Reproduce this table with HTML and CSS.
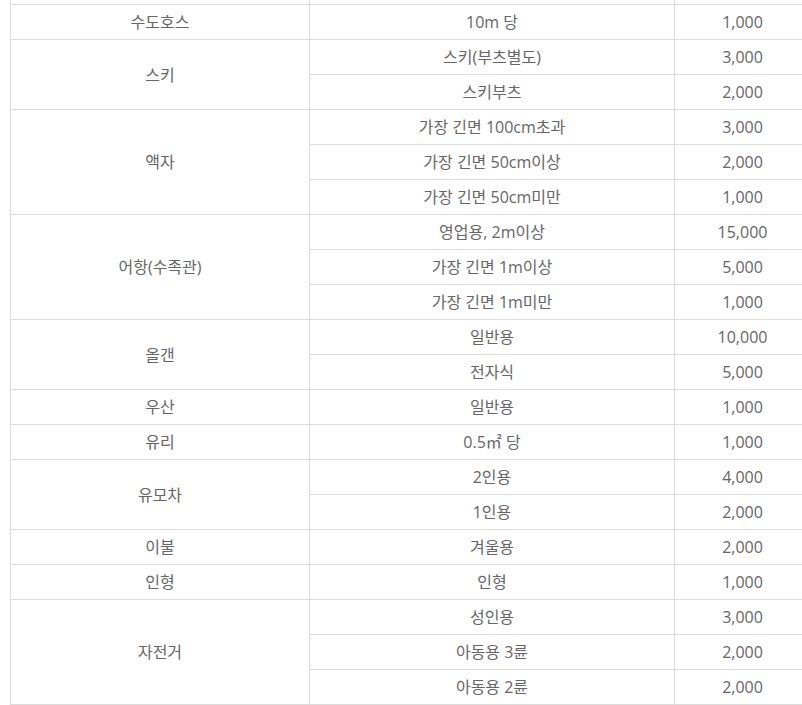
FILE: index.html
```html
<!DOCTYPE html>
<html lang="ko">
<head>
<meta charset="utf-8">
<link rel="stylesheet" href="styles.css">
</head>
<body>
<div class="viewport">
<table class="price">
<colgroup><col class="c1"><col class="c2"><col class="c3"></colgroup>
<tbody>
<tr class="prev"><td></td><td></td><td></td></tr>
<tr><td>수도호스</td><td>10m 당</td><td>1,000</td></tr>
<tr><td rowspan="2">스키</td><td>스키(부츠별도)</td><td>3,000</td></tr>
<tr><td>스키부츠</td><td>2,000</td></tr>
<tr><td rowspan="3">액자</td><td>가장 긴면 100cm초과</td><td>3,000</td></tr>
<tr><td>가장 긴면 50cm이상</td><td>2,000</td></tr>
<tr><td>가장 긴면 50cm미만</td><td>1,000</td></tr>
<tr><td rowspan="3">어항(수족관)</td><td>영업용, 2m이상</td><td>15,000</td></tr>
<tr><td>가장 긴면 1m이상</td><td>5,000</td></tr>
<tr><td>가장 긴면 1m미만</td><td>1,000</td></tr>
<tr><td rowspan="2">올갠</td><td>일반용</td><td>10,000</td></tr>
<tr><td>전자식</td><td>5,000</td></tr>
<tr><td>우산</td><td>일반용</td><td>1,000</td></tr>
<tr><td>유리</td><td>0.5㎡ 당</td><td>1,000</td></tr>
<tr><td rowspan="2">유모차</td><td>2인용</td><td>4,000</td></tr>
<tr><td>1인용</td><td>2,000</td></tr>
<tr><td>이불</td><td>겨울용</td><td>2,000</td></tr>
<tr><td>인형</td><td>인형</td><td>1,000</td></tr>
<tr><td rowspan="3">자전거</td><td>성인용</td><td>3,000</td></tr>
<tr><td>아동용 3륜</td><td>2,000</td></tr>
<tr><td>아동용 2륜</td><td>2,000</td></tr>
</tbody>
</table>
</div>
</body>
</html>
```
FILE: styles.css
```css
html, body {
  margin: 0;
  padding: 0;
  background: #fff;
}
.viewport {
  width: 802px;
  height: 705px;
  overflow: hidden;
}
.price {
  margin: -31px 0 0 10px;
  border-collapse: collapse;
  table-layout: fixed;
  width: 800px;
  font-family: "Open Sans", "Noto Sans CJK KR", sans-serif;
  font-size: 16px;
  color: #666;
}
.c1 { width: 299px; }
.c2 { width: 365px; }
.c3 { width: 136px; }
.price td {
  border: 1px solid #dcdcdc;
  height: 34px;
  padding: 0;
  line-height: 20px;
  text-align: center;
  vertical-align: middle;
}
```
